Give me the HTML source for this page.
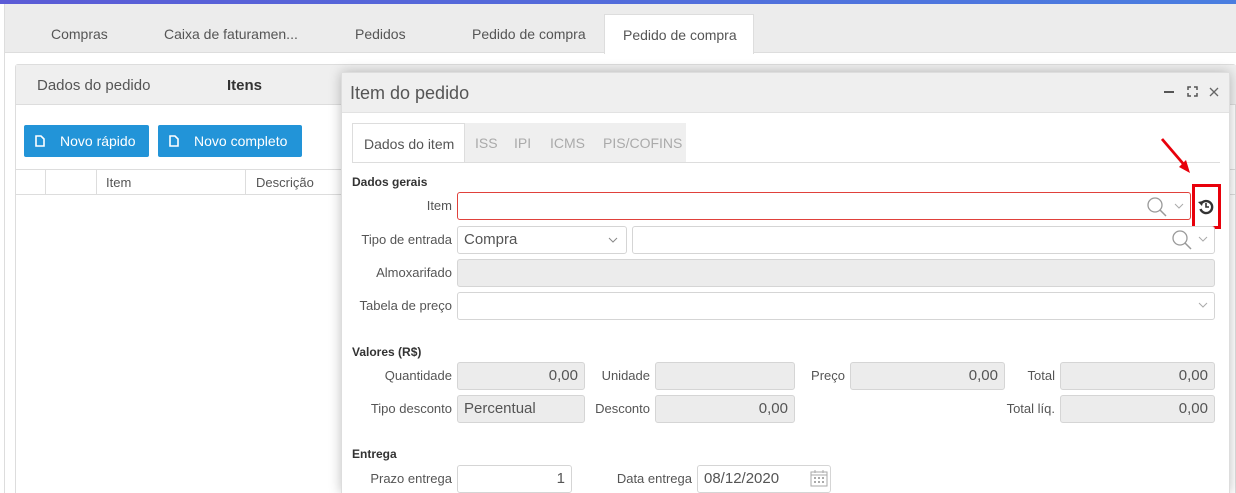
<!DOCTYPE html>
<html><head><meta charset="utf-8"><style>
*{box-sizing:border-box;margin:0;padding:0}
html,body{width:1236px;height:493px;overflow:hidden}
body{background:#fff;font-family:"Liberation Sans",sans-serif;font-size:13px;color:#555;position:relative}
.a{position:absolute}
.inp{position:absolute;height:28px;border:1px solid #d5d5d5;border-radius:3px;background:#fff;font-size:15px;color:#555;padding:0 6px;line-height:26px}
.dis{background:#ececec}
.r{text-align:right}
.lbl{position:absolute;font-size:13px;color:#555;text-align:right;line-height:28px}
.btn{position:absolute;background:#2294d8;color:#fff;font-size:14px;height:32px;line-height:32px;border-radius:2px}
</style></head><body>
<div class="a" style="left:0;top:0;width:1236px;height:4px;background:linear-gradient(90deg,#5b5bd6,#4a7ee0)"></div>
<div class="a" style="left:4px;top:4px;width:1232px;height:49px;background:#ececec;border-bottom:1px solid #ddd"></div>
<div class="a" style="left:4px;top:4px;width:1px;height:489px;background:#ddd"></div>
<div class="a" style="left:51px;top:26px;font-size:14px">Compras</div>
<div class="a" style="left:164px;top:26px;font-size:14px">Caixa de faturamen...</div>
<div class="a" style="left:355px;top:26px;font-size:14px">Pedidos</div>
<div class="a" style="left:472px;top:26px;font-size:14px">Pedido de compra</div>
<div class="a" style="left:604px;top:14px;width:150px;height:40px;background:#fff;border:1px solid #ddd;border-bottom:none;font-size:14px;padding:12px 0 0 18px">Pedido de compra</div>

<div class="a" style="left:15px;top:64px;width:1221px;height:429px;border:1px solid #ddd;border-bottom:none;border-radius:3px 3px 0 0"></div>
<div class="a" style="left:16px;top:65px;width:1220px;height:40px;background:#efefef;border-bottom:1px solid #ddd"></div>
<div class="a" style="left:37px;top:77px;font-size:15px">Dados do pedido</div>
<div class="a" style="left:227px;top:77px;font-size:15px;font-weight:bold;color:#333">Itens</div>
<div class="btn" style="left:24px;top:125px;width:125px;padding-left:36px">Novo rápido</div>
<div class="btn" style="left:158px;top:125px;width:144px;padding-left:36px">Novo completo</div>
<svg class="a" style="left:35px;top:135px" width="10" height="12"><path d="M1 1h5l3 3v7H1z" fill="none" stroke="#fff" stroke-width="1.6"/></svg>
<svg class="a" style="left:169px;top:135px" width="10" height="12"><path d="M1 1h5l3 3v7H1z" fill="none" stroke="#fff" stroke-width="1.6"/></svg>
<div class="a" style="left:16px;top:169px;width:1220px;height:26px;border-top:1px solid #ddd;border-bottom:1px solid #ddd"></div>
<div class="a" style="left:45px;top:170px;width:1px;height:24px;background:#ddd"></div>
<div class="a" style="left:96px;top:170px;width:1px;height:24px;background:#ddd"></div>
<div class="a" style="left:245px;top:170px;width:1px;height:24px;background:#ddd"></div>
<div class="a" style="left:106px;top:175px">Item</div>
<div class="a" style="left:256px;top:175px">Descrição</div>
<div class="a" style="left:1228px;top:175px">i</div>

<div class="a" style="left:341px;top:72px;width:889px;height:421px;background:#fff;border:1px solid #ddd;border-bottom:none;border-radius:3px 3px 0 0;box-shadow:0 0 12px rgba(0,0,0,.25)"></div>
<div class="a" style="left:342px;top:73px;width:887px;height:40px;background:#efefef;border-bottom:1px solid #e2e2e2"></div>
<div class="a" style="left:350px;top:83px;font-size:18px;color:#555">Item do pedido</div>
<div class="a" style="left:1164px;top:91px;width:10px;height:2px;background:#555"></div>
<svg class="a" style="left:1187px;top:86px" width="11" height="11"><path d="M1 4V1h3M7 1h3v3M10 7v3H7M4 10H1V7" fill="none" stroke="#555" stroke-width="1.5"/></svg>
<svg class="a" style="left:1209px;top:87px" width="10" height="10"><path d="M1 1l8 8M9 1L1 9" stroke="#666" stroke-width="1.3"/></svg>

<div class="a" style="left:352px;top:123px;width:334px;height:39px;background:#efefef"></div>
<div class="a" style="left:352px;top:123px;width:113px;height:40px;background:#fff;border:1px solid #ddd;border-bottom:none;font-size:14px;padding:12px 0 0 11px">Dados do item</div>
<div class="a" style="left:475px;top:135px;font-size:14px;color:#aaa">ISS</div>
<div class="a" style="left:514px;top:135px;font-size:14px;color:#aaa">IPI</div>
<div class="a" style="left:550px;top:135px;font-size:14px;color:#aaa">ICMS</div>
<div class="a" style="left:603px;top:135px;font-size:14px;color:#aaa">PIS/COFINS</div>
<div class="a" style="left:352px;top:162px;width:868px;height:1px;background:#ddd"></div>

<div class="a" style="left:352px;top:175px;font-size:12px;font-weight:bold;color:#333">Dados gerais</div>
<div class="lbl" style="left:352px;top:192px;width:100px">Item</div>
<div class="inp" style="left:457px;top:192px;width:734px;border-color:#e0413b"></div>
<svg class="a" style="left:1146px;top:196px" width="22" height="22"><circle cx="9" cy="9" r="7" fill="none" stroke="#999" stroke-width="1.3"/><path d="M14 14l6 6" stroke="#999" stroke-width="1.5"/></svg>
<svg class="a" style="left:1174px;top:203px" width="10" height="6"><path d="M1 1l4 4 4-4" fill="none" stroke="#aaa"/></svg>
<div class="a" style="left:1192px;top:184px;width:29px;height:45px;border:3px solid #e8000b"></div>
<svg class="a" style="left:1198px;top:199px" width="16" height="16"><path d="M3 5A6 6 0 1 1 2.5 10" fill="none" stroke="#333" stroke-width="2.4"/><path d="M0 3l4 4 1-5z" fill="#333"/><path d="M8 4v4h3" fill="none" stroke="#333" stroke-width="1.6"/></svg>
<svg class="a" style="left:1158px;top:136px" width="36" height="40"><path d="M4 3L28 31" stroke="#e8000b" stroke-width="2.8"/><path d="M32 37L21 31l7-7z" fill="#e8000b"/></svg>

<div class="lbl" style="left:352px;top:226px;width:100px">Tipo de entrada</div>
<div class="inp" style="left:457px;top:226px;width:170px">Compra</div>
<svg class="a" style="left:608px;top:237px" width="10" height="6"><path d="M1 1l4 4 4-4" fill="none" stroke="#888"/></svg>
<div class="inp" style="left:632px;top:226px;width:583px"></div>
<svg class="a" style="left:1171px;top:229px" width="22" height="22"><circle cx="9" cy="9" r="7" fill="none" stroke="#999" stroke-width="1.3"/><path d="M14 14l6 6" stroke="#999" stroke-width="1.5"/></svg>
<svg class="a" style="left:1198px;top:236px" width="10" height="6"><path d="M1 1l4 4 4-4" fill="none" stroke="#aaa"/></svg>

<div class="lbl" style="left:352px;top:259px;width:100px">Almoxarifado</div>
<div class="inp dis" style="left:457px;top:259px;width:758px"></div>
<div class="lbl" style="left:352px;top:292px;width:100px">Tabela de preço</div>
<div class="inp" style="left:457px;top:292px;width:758px"></div>
<svg class="a" style="left:1198px;top:302px" width="10" height="6"><path d="M1 1l4 4 4-4" fill="none" stroke="#aaa"/></svg>

<div class="a" style="left:352px;top:345px;font-size:12px;font-weight:bold;color:#333">Valores (R$)</div>
<div class="lbl" style="left:352px;top:362px;width:100px">Quantidade</div>
<div class="inp dis r" style="left:457px;top:362px;width:128px">0,00</div>
<div class="lbl" style="left:590px;top:362px;width:60px">Unidade</div>
<div class="inp dis" style="left:655px;top:362px;width:140px"></div>
<div class="lbl" style="left:800px;top:362px;width:45px">Preço</div>
<div class="inp dis r" style="left:850px;top:362px;width:155px">0,00</div>
<div class="lbl" style="left:1010px;top:362px;width:45px">Total</div>
<div class="inp dis r" style="left:1060px;top:362px;width:155px">0,00</div>

<div class="lbl" style="left:352px;top:395px;width:100px">Tipo desconto</div>
<div class="inp dis" style="left:457px;top:395px;width:128px">Percentual</div>
<div class="lbl" style="left:585px;top:395px;width:65px">Desconto</div>
<div class="inp dis r" style="left:655px;top:395px;width:140px">0,00</div>
<div class="lbl" style="left:995px;top:395px;width:60px">Total líq.</div>
<div class="inp dis r" style="left:1060px;top:395px;width:155px">0,00</div>

<div class="a" style="left:352px;top:447px;font-size:12px;font-weight:bold;color:#333">Entrega</div>
<div class="lbl" style="left:352px;top:465px;width:100px">Prazo entrega</div>
<div class="inp r" style="left:457px;top:465px;width:115px">1</div>
<div class="lbl" style="left:590px;top:465px;width:102px">Data entrega</div>
<div class="inp" style="left:697px;top:465px;width:134px">08/12/2020</div>
<svg class="a" style="left:810px;top:469px" width="18" height="18"><rect x="1" y="3" width="16" height="14" fill="none" stroke="#aaa"/><path d="M1 6h16M5 1v3M13 1v3" stroke="#aaa"/><path d="M4 9h2M8 9h2M12 9h2M4 13h2M8 13h2M12 13h2" stroke="#aaa" stroke-width="2"/></svg>
</body></html>
